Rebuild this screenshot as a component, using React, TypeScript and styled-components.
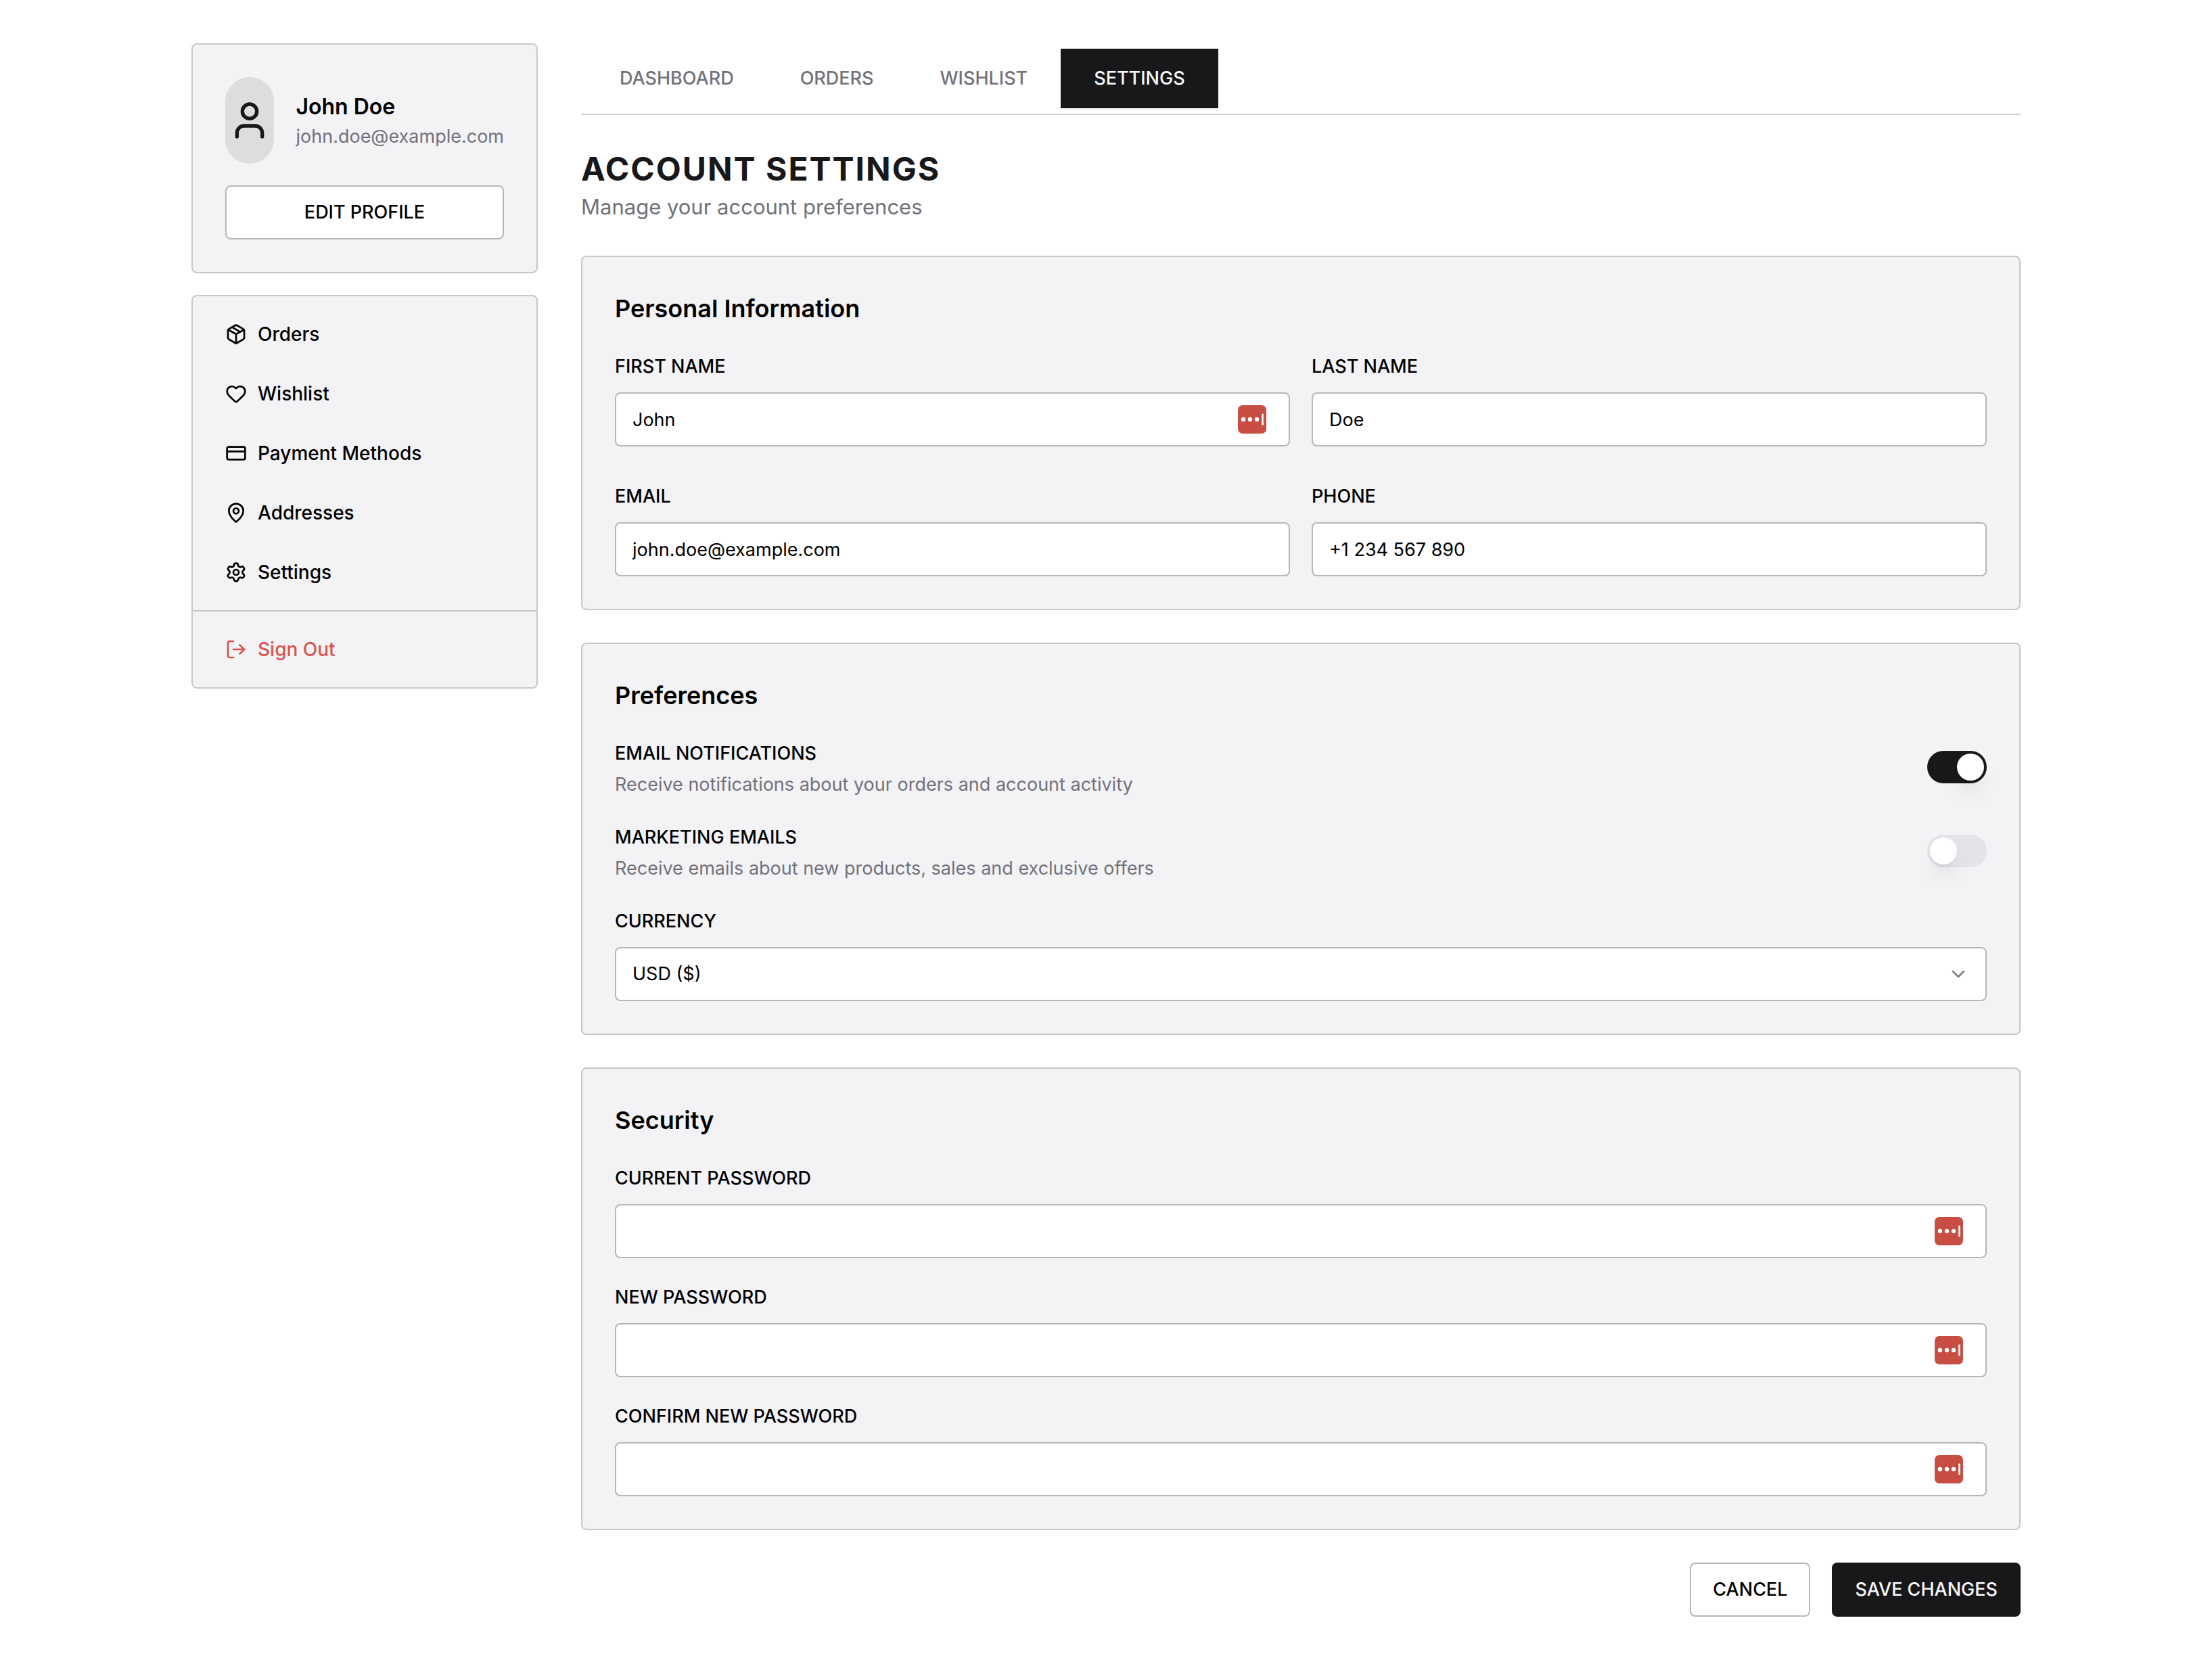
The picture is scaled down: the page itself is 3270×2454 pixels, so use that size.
import React, { useState } from "react";
import styled, { createGlobalStyle, css } from "styled-components";
import {
  ChevronDown,
  CreditCard,
  Heart,
  LogOut,
  MapPin,
  Package,
  Settings,
  User,
} from "lucide-react";

const color = {
  ink: "#000000",
  primary: "#18181b",
  muted: "#71717a",
  surface: "#f3f3f6",
  border: "#c7c7c9",
  control: "#b7b7b9",
  danger: "#d9534f",
  track: "#e3e3e8",
  avatar: "#dddddf",
  vault: "#c84d42",
};

const GlobalStyle = createGlobalStyle`
  *, *::before, *::after { box-sizing: border-box; }
  body {
    margin: 0;
    background: #ffffff;
    color: ${color.ink};
    font-family: Inter, "Liberation Sans", sans-serif;
    font-size: 27px;
    line-height: 40px;
    -webkit-font-smoothing: antialiased;
  }
  button, input, select { font: inherit; color: inherit; margin: 0; }
  h1, h2, p { margin: 0; }
`;

const Page = styled.div`
  display: grid;
  grid-template-columns: 512px minmax(0, 1fr);
  align-items: start;
  gap: 64px;
  max-width: 2800px;
  margin: 0 auto;
  padding: 64px 48px;

  @media (max-width: 1500px) {
    grid-template-columns: minmax(0, 1fr);
  }
`;

const Sidebar = styled.aside`
  display: flex;
  flex-direction: column;
  gap: 32px;
`;

const panel = css`
  border: 2px solid ${color.border};
  border-radius: 8px;
  background: ${color.surface};
`;

const ProfileCard = styled.section`
  ${panel}
  display: flex;
  flex-direction: column;
  gap: 32px;
  padding: 48px;
`;

const ProfileRow = styled.div`
  display: flex;
  align-items: center;
  gap: 32px;
`;

const Avatar = styled.div`
  display: flex;
  flex: 0 1 128px;
  align-items: center;
  justify-content: center;
  min-width: 0;
  height: 128px;
  border-radius: 64px;
  background: ${color.avatar};
  color: ${color.primary};

  svg { flex: none; }
`;

const ProfileText = styled.div`
  flex: none;
`;

const ProfileName = styled.h2`
  font-size: 32px;
  line-height: 48px;
  font-weight: 600;
`;

const ProfileEmail = styled.p`
  color: ${color.muted};
`;

const Button = styled.button<{ $primary?: boolean }>`
  height: 80px;
  padding: 0 32px;
  border: 2px solid ${(p) => (p.$primary ? color.primary : color.control)};
  border-radius: 8px;
  background: ${(p) => (p.$primary ? color.primary : "#ffffff")};
  color: ${(p) => (p.$primary ? "#fafafa" : color.ink)};
  font-weight: 500;
  text-transform: uppercase;
  cursor: pointer;
`;

const MenuCard = styled.nav`
  ${panel}
`;

const MenuGroup = styled.div`
  display: flex;
  flex-direction: column;
  gap: 8px;
  padding: 16px;

  & + & { border-top: 2px solid ${color.border}; }
`;

const MenuLink = styled.a<{ $danger?: boolean }>`
  display: flex;
  align-items: center;
  gap: 16px;
  height: 80px;
  padding: 0 32px;
  color: ${(p) => (p.$danger ? color.danger : color.ink)};
  font-size: 28px;
  font-weight: 500;
  text-decoration: none;
`;

const Main = styled.main`
  display: flex;
  flex-direction: column;
  gap: 48px;
  min-width: 0;
`;

const TabList = styled.div`
  display: flex;
  padding: 8px;
  border-bottom: 2px solid #d0d0d2;
`;

const Tab = styled.button<{ $active: boolean }>`
  height: 88px;
  padding: 0 49px;
  border: 0;
  background: ${(p) => (p.$active ? color.primary : "transparent")};
  box-shadow: ${(p) => (p.$active ? "0 2px 4px rgba(0, 0, 0, 0.05)" : "none")};
  color: ${(p) => (p.$active ? "#fafafa" : color.muted)};
  font-weight: 500;
  text-transform: uppercase;
  cursor: pointer;
`;

const Title = styled.h1`
  color: ${color.primary};
  font-size: 48px;
  line-height: 64px;
  font-weight: 700;
  letter-spacing: 2px;
  text-transform: uppercase;
`;

const Subtitle = styled.p`
  color: ${color.muted};
  font-size: 31px;
  line-height: 48px;
`;

const Form = styled.form`
  display: flex;
  flex-direction: column;
  gap: 48px;
`;

const Card = styled.section`
  ${panel}
  display: flex;
  flex-direction: column;
  gap: 32px;
  padding: 48px;
`;

const CardTitle = styled.h2`
  font-size: 36px;
  line-height: 56px;
  font-weight: 600;
`;

const FieldGrid = styled.div`
  display: grid;
  grid-template-columns: repeat(2, minmax(0, 1fr));
  gap: 48px 32px;
`;

const FieldBox = styled.div`
  display: flex;
  flex-direction: column;
  gap: 16px;
`;

const Label = styled.label`
  padding-top: 4px;
  line-height: 44px;
  font-weight: 500;
  text-transform: uppercase;
`;

const Control = styled.div`
  position: relative;
`;

const controlBox = css`
  display: block;
  width: 100%;
  height: 80px;
  padding: 0 24px;
  border: 2px solid ${color.control};
  border-radius: 8px;
  background: #ffffff;
`;

const Input = styled.input`
  ${controlBox}
`;

const Select = styled.select`
  ${controlBox}
  appearance: none;
`;

const VaultButton = styled.button`
  position: absolute;
  top: 0;
  right: 35px;
  bottom: 0;
  display: flex;
  align-items: center;
  padding: 0;
  border: 0;
  background: none;
`;

const SelectArrow = styled(ChevronDown)`
  position: absolute;
  top: 24px;
  right: 26px;
  opacity: 0.5;
  pointer-events: none;
`;

const SwitchRow = styled.div`
  display: flex;
  align-items: center;
  justify-content: space-between;
  gap: 32px;
`;

const SwitchText = styled.div`
  display: flex;
  flex-direction: column;
  gap: 4px;
`;

const Hint = styled.p`
  color: ${color.muted};
`;

const Switch = styled.input`
  flex: none;
  display: flex;
  width: 88px;
  height: 48px;
  padding: 4px;
  border-radius: 24px;
  background: ${color.track};
  appearance: none;
  cursor: pointer;

  &::before {
    content: "";
    width: 40px;
    height: 40px;
    border-radius: 20px;
    background: #ffffff;
    box-shadow: 0 20px 30px -6px rgba(0, 0, 0, 0.1), 0 8px 12px -8px rgba(0, 0, 0, 0.1);
  }

  &:checked {
    justify-content: flex-end;
    background: ${color.primary};
  }
`;

const Actions = styled.div`
  display: flex;
  justify-content: flex-end;
  gap: 32px;
`;

function VaultIcon() {
  return (
    <svg width="42" height="42" viewBox="0 0 42 42" aria-hidden="true">
      <rect width="42" height="42" rx="7" fill={color.vault} />
      <circle cx="8" cy="21" r="3.2" fill="#fff" />
      <circle cx="18" cy="21" r="3.2" fill="#fff" />
      <circle cx="28" cy="21" r="3.2" fill="#fff" />
      <rect x="35.2" y="12.5" width="2.6" height="17" rx="1" fill="#fff" />
    </svg>
  );
}

interface FieldProps {
  id: string;
  label: string;
  type?: string;
  value?: string;
  vault?: boolean;
}

function Field({ id, label, type = "text", value = "", vault }: FieldProps) {
  return (
    <FieldBox>
      <Label htmlFor={id}>{label}</Label>
      <Control>
        <Input id={id} type={type} defaultValue={value} />
        {vault && (
          <VaultButton type="button" aria-label={`Fill ${label}`}>
            <VaultIcon />
          </VaultButton>
        )}
      </Control>
    </FieldBox>
  );
}

interface SwitchFieldProps {
  id: string;
  label: string;
  hint: string;
  on?: boolean;
}

function SwitchField({ id, label, hint, on }: SwitchFieldProps) {
  return (
    <SwitchRow>
      <SwitchText>
        <Label htmlFor={id}>{label}</Label>
        <Hint id={`${id}-hint`}>{hint}</Hint>
      </SwitchText>
      <Switch id={id} type="checkbox" role="switch" defaultChecked={on} aria-describedby={`${id}-hint`} />
    </SwitchRow>
  );
}

const menu = [
  { label: "Orders", Icon: Package },
  { label: "Wishlist", Icon: Heart },
  { label: "Payment Methods", Icon: CreditCard },
  { label: "Addresses", Icon: MapPin },
  { label: "Settings", Icon: Settings },
];

const tabs = ["Dashboard", "Orders", "Wishlist", "Settings"];

export default function App() {
  const [tab, setTab] = useState("Settings");

  return (
    <>
      <GlobalStyle />
      <Page>
        <Sidebar>
          <ProfileCard>
            <ProfileRow>
              <Avatar>
                <User size={64} />
              </Avatar>
              <ProfileText>
                <ProfileName>John Doe</ProfileName>
                <ProfileEmail>john.doe@example.com</ProfileEmail>
              </ProfileText>
            </ProfileRow>
            <Button type="button">Edit Profile</Button>
          </ProfileCard>
          <MenuCard aria-label="Account">
            <MenuGroup>
              {menu.map(({ label, Icon }) => (
                <MenuLink key={label} href="#">
                  <Icon size={32} />
                  {label}
                </MenuLink>
              ))}
            </MenuGroup>
            <MenuGroup>
              <MenuLink href="#" $danger>
                <LogOut size={32} />
                Sign Out
              </MenuLink>
            </MenuGroup>
          </MenuCard>
        </Sidebar>

        <Main>
          <TabList role="tablist">
            {tabs.map((name) => (
              <Tab
                key={name}
                type="button"
                role="tab"
                aria-selected={name === tab}
                $active={name === tab}
                onClick={() => setTab(name)}
              >
                {name}
              </Tab>
            ))}
          </TabList>

          <header>
            <Title>Account Settings</Title>
            <Subtitle>Manage your account preferences</Subtitle>
          </header>

          <Form>
            <Card>
              <CardTitle>Personal Information</CardTitle>
              <FieldGrid>
                <Field id="first-name" label="First Name" value="John" vault />
                <Field id="last-name" label="Last Name" value="Doe" />
                <Field id="email" label="Email" type="email" value="john.doe@example.com" />
                <Field id="phone" label="Phone" type="tel" value="+1 234 567 890" />
              </FieldGrid>
            </Card>

            <Card>
              <CardTitle>Preferences</CardTitle>
              <SwitchField
                id="email-notifications"
                label="Email Notifications"
                hint="Receive notifications about your orders and account activity"
                on
              />
              <SwitchField
                id="marketing-emails"
                label="Marketing Emails"
                hint="Receive emails about new products, sales and exclusive offers"
              />
              <FieldBox>
                <Label htmlFor="currency">Currency</Label>
                <Control>
                  <Select id="currency" defaultValue="usd">
                    <option value="usd">USD ($)</option>
                  </Select>
                  <SelectArrow size={32} />
                </Control>
              </FieldBox>
            </Card>

            <Card>
              <CardTitle>Security</CardTitle>
              <Field id="current-password" label="Current Password" type="password" vault />
              <Field id="new-password" label="New Password" type="password" vault />
              <Field id="confirm-password" label="Confirm New Password" type="password" vault />
            </Card>

            <Actions>
              <Button type="button">Cancel</Button>
              <Button type="submit" $primary>
                Save Changes
              </Button>
            </Actions>
          </Form>
        </Main>
      </Page>
    </>
  );
}
